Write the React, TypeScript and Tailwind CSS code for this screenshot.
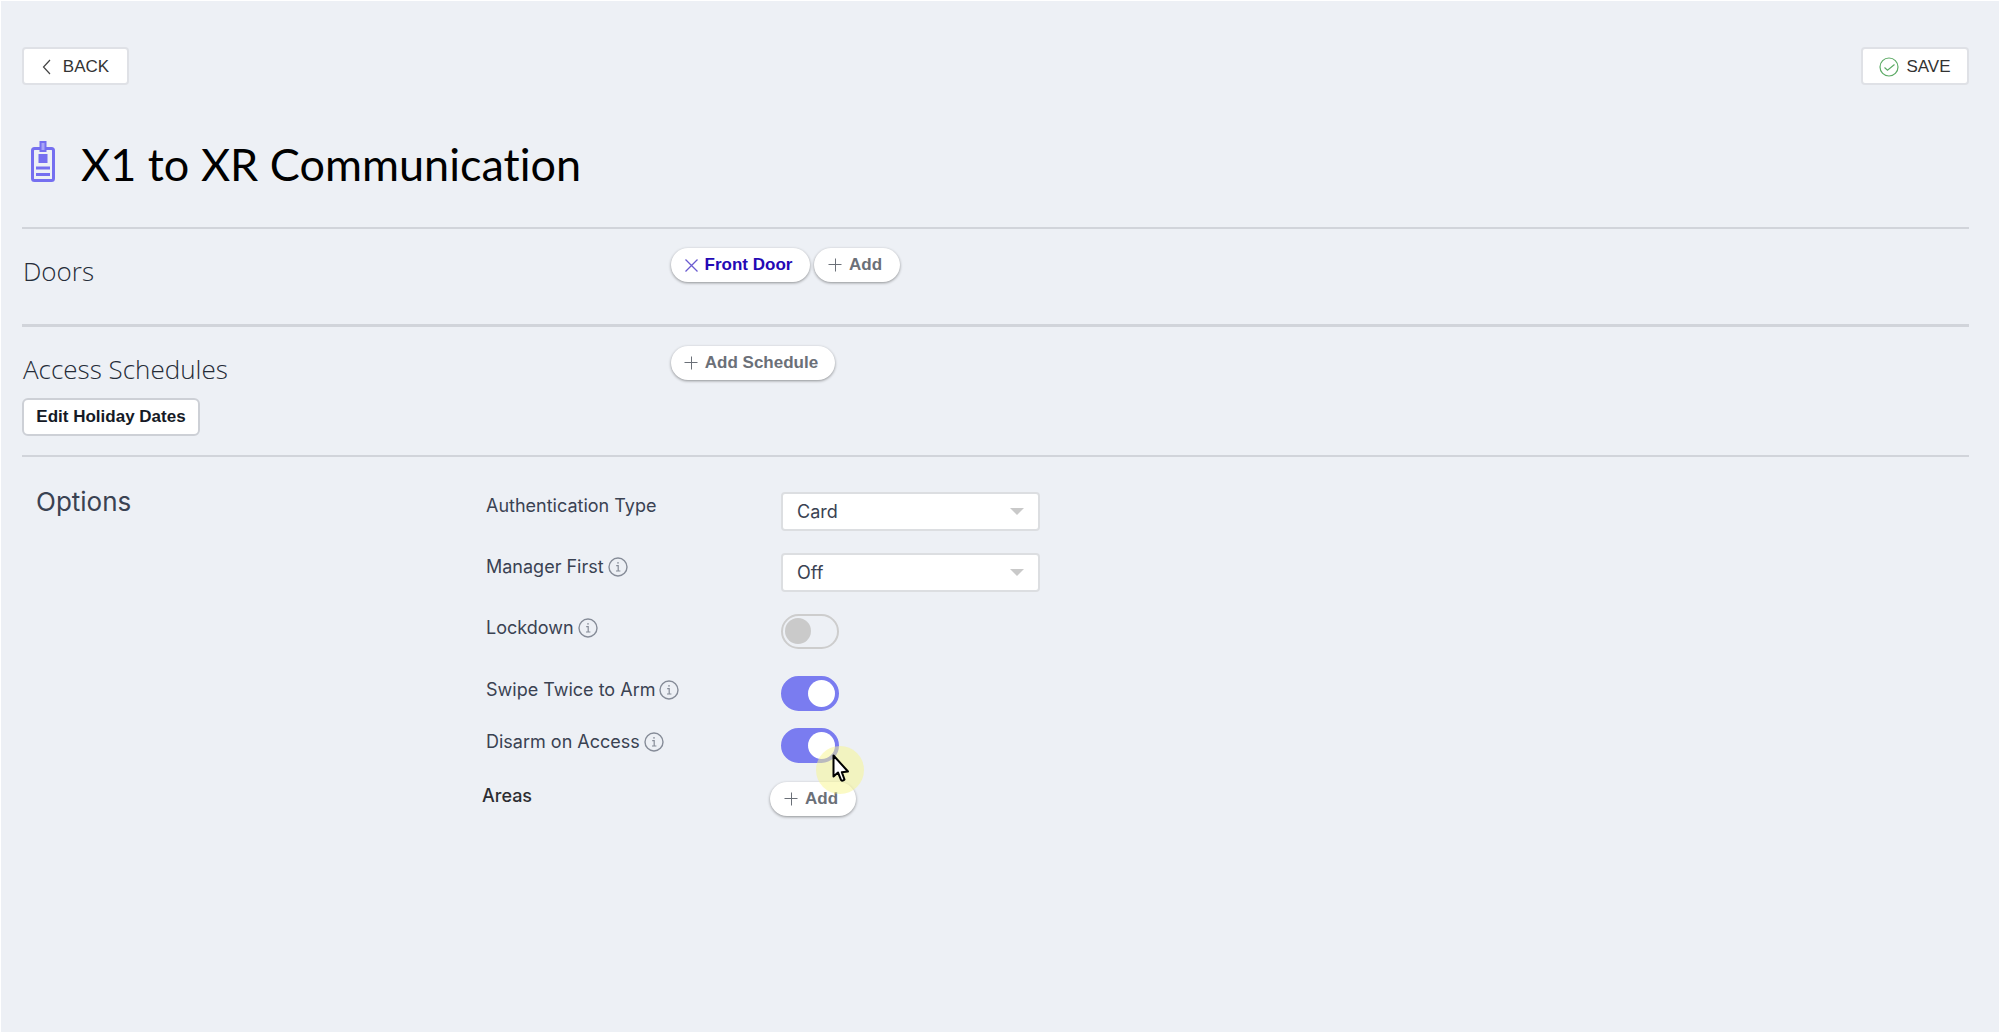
import React from "react";

const chip =
  "flex h-[34px] items-center justify-center gap-[7px] rounded-full bg-white pr-1 font-['Liberation_Sans',sans-serif] text-[17px] font-bold shadow-[0_1px_3px_rgba(0,0,0,0.4)]";

function Plus() {
  return (
    <svg width="14" height="14" viewBox="0 0 14 14" stroke="currentColor" strokeWidth="1" fill="none" aria-hidden="true">
      <path d="M7.500 0.500v13M0.500 6.500h13" />
    </svg>
  );
}

function Info() {
  return (
    <svg width="20" height="20" viewBox="0 0 20 20" fill="none" stroke="#868c98" strokeWidth="1.4" aria-hidden="true">
      <circle cx="10" cy="10" r="9" />
      <path d="M8.200 8.600h2v5.400M8 14h4.400" strokeWidth="1.2" />
      <circle cx="10" cy="5.900" r="0.800" fill="#868c98" stroke="none" />
    </svg>
  );
}

function SelectBox({ id, value, options }: { id: string; value: string; options: string[] }) {
  return (
    <div className="relative w-[259px]">
      <select
        id={id}
        defaultValue={value}
        className="h-[39px] w-full appearance-none rounded-[4px] border-2 border-[#dcdee1] bg-white pl-[14px] font-['Inter',sans-serif] text-[18px] text-[#3a4252]"
      >
        {options.map((o) => (
          <option key={o}>{o}</option>
        ))}
      </select>
      <svg className="pointer-events-none absolute top-4 right-4" width="14" height="7" viewBox="0 0 14 7" aria-hidden="true">
        <path d="M0 0h14L7 7z" fill="#c9c9c9" />
      </svg>
    </div>
  );
}

function Toggle({ id, on }: { id: string; on?: boolean }) {
  return (
    <span className="relative block h-[35px] w-[58px]">
      <input
        id={id}
        type="checkbox"
        role="switch"
        defaultChecked={on}
        className="peer block h-full w-full appearance-none rounded-full border-2 border-[#cdcdcd] checked:border-[#7a7cf0] checked:bg-[#7a7cf0]"
      />
      <span className="pointer-events-none absolute top-1 left-1 size-[26px] rounded-full bg-[#cacaca] peer-checked:left-[27px] peer-checked:size-[27px] peer-checked:bg-white" />
    </span>
  );
}

function Pointer() {
  return (
    <span className="pointer-events-none absolute top-[18px] left-[35px] z-10 size-12 rounded-full bg-[#f8f58c]/50" aria-hidden="true">
      <svg className="absolute top-2 left-4" width="18" height="29" viewBox="0 0 18 29">
        <path
          d="M1.500 1.500V22.500L6 18.500L9 25.800Q10.500 27.600 12.500 25.500L9.800 18.200L16 17.500Z"
          fill="#fff"
          stroke="#000"
          strokeWidth="2"
          strokeLinejoin="round"
        />
      </svg>
    </span>
  );
}

function Row({ id, label, info, className, children }: { id: string; label: string; info?: boolean; className: string; children: React.ReactNode }) {
  return (
    <div className={`flex items-start ${className}`}>
      <div className="mt-0.5 flex w-[295px] items-center gap-1">
        <label htmlFor={id} className="font-['Inter',sans-serif] text-[18px] leading-6 text-[#3a4252]">{label}</label>
        {info && <Info />}
      </div>
      {children}
    </div>
  );
}

export default function App() {
  return (
    <main className="min-h-screen border-t border-l border-white bg-[#edf0f5] pr-[30px] pl-[21px] font-['Liberation_Sans',sans-serif]">
      <header className="flex justify-between pt-[46px]">
        <button className="flex h-[38px] w-[107px] items-center justify-center gap-3 rounded-[4px] border-2 border-[#dfe1e6] bg-white pt-0.5 text-[17px] text-[#333]">
          <svg width="9" height="16" viewBox="0 0 9 16" fill="none" stroke="#444" strokeWidth="1.2" aria-hidden="true">
            <path d="M8 1L1.500 8L8 15" />
          </svg>
          BACK
        </button>
        <button className="flex h-[38px] w-[108px] items-center justify-center gap-[7px] rounded-[4px] border-2 border-[#dfe1e6] bg-white pt-0.5 text-[17px] text-[#333]">
          <svg width="20" height="20" viewBox="0 0 20 20" fill="none" stroke="#5dab66" strokeWidth="1.2" aria-hidden="true">
            <circle cx="10" cy="10" r="9" />
            <path d="M5.500 10.500l3 2.700L15.500 7.500" />
          </svg>
          SAVE
        </button>
      </header>

      <div className="flex h-[142px] items-center gap-[25px] pt-3 pl-[8px]">
        <svg width="26" height="42" viewBox="0 0 26 42" fill="none" stroke="#756ff0" strokeWidth="3" aria-hidden="true">
          <rect x="2.500" y="7.500" width="21" height="32" rx="2" />
          <rect x="10.500" y="1" width="5" height="9" fill="#a9a5f7" strokeWidth="2" />
          <path d="M8.500 13h9v9h-9z" fill="#756ff0" stroke="none" />
          <path d="M6 27h14M6 33.500h14" />
        </svg>
        <h1 className="pt-1 font-['Lato',sans-serif] text-[45px] leading-[56px] text-black [font-variant-ligatures:none]">X1 to XR Communication</h1>
      </div>

      <section className="flex h-[97px] border-t-2 border-[#d1d4da] pt-[19px]">
        <h2 className="w-[649px] pt-[5px] pl-px font-['Open_Sans',sans-serif] text-[26px] leading-9 font-light text-[#252c38]">Doors</h2>
        <div className="flex gap-1">
          <button className={`${chip} w-[139px] text-[#2409b5]`}>
            <svg width="13" height="13" viewBox="0 0 13 13" stroke="#6a5bd0" strokeWidth="1.3" aria-hidden="true">
              <path d="M0.500 0.500l12 12M12.500 0.500l-12 12" />
            </svg>
            Front Door
          </button>
          <button className={`${chip} w-[86px] text-[#6b7078]`}>
            <Plus />Add
          </button>
        </div>
      </section>

      <section className="flex h-[131px] border-t-3 border-[#d1d4da] pt-[19px]">
        <div className="w-[649px]">
          <h2 className="pt-[5px] pl-px font-['Open_Sans',sans-serif] text-[26px] leading-9 font-light text-[#252c38]">Access Schedules</h2>
          <button className="mt-[11px] h-[38px] w-[178px] rounded-md border-2 border-[#cdd0d6] bg-white text-[17px] font-bold text-[#151a26]">
            Edit Holiday Dates
          </button>
        </div>
        <button className={`${chip} w-[164px] text-[#6b7078]`}>
          <Plus />Add Schedule
        </button>
      </section>

      <section className="flex border-t-2 border-[#d1d4da]">
        <h2 className="w-[464px] pt-[27px] pl-[14px] font-['Inter',sans-serif] text-[26px] leading-9 text-[#3a4252]">Options</h2>
        <div className="pt-[35px]">
          <Row id="auth" label="Authentication Type" className="h-[61px]">
            <SelectBox id="auth" value="Card" options={["Card", "Card and PIN", "PIN"]} />
          </Row>
          <Row id="manager" label="Manager First" info className="h-[61px]">
            <SelectBox id="manager" value="Off" options={["Off", "On"]} />
          </Row>
          <Row id="lockdown" label="Lockdown" info className="h-[62px]">
            <Toggle id="lockdown" />
          </Row>
          <Row id="swipe" label="Swipe Twice to Arm" info className="h-[52px]">
            <Toggle id="swipe" on />
          </Row>
          <Row id="disarm" label="Disarm on Access" info className="h-[54px]">
            <div className="relative">
              <Toggle id="disarm" on />
              <Pointer />
            </div>
          </Row>
          <div className="-ml-1 flex items-start">
            <span id="areas-label" className="mt-0.5 w-[288px] font-['Inter',sans-serif] text-[18px] leading-6 font-medium text-[#2c2d31]">Areas</span>
            <button aria-describedby="areas-label" className={`${chip} w-[86px] text-[#6b7078]`}>
              <Plus />Add
            </button>
          </div>
        </div>
      </section>
    </main>
  );
}
